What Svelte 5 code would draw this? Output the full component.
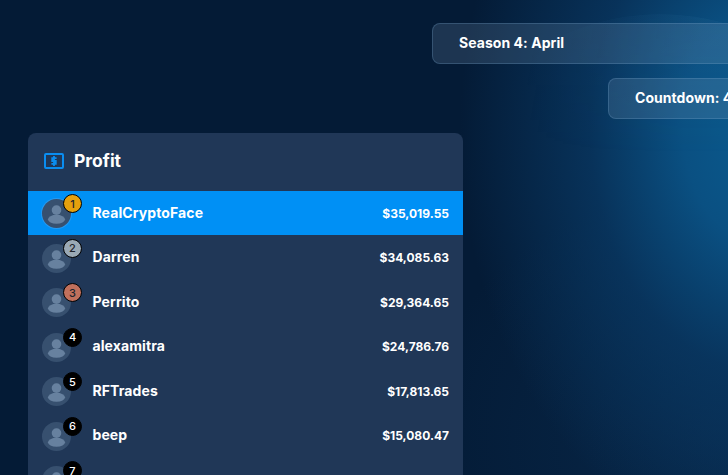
<script>
    const players = [
        { name: 'RealCryptoFace', profit: '$35,019.55', medal: 'gold' },
        { name: 'Darren', profit: '$34,085.63', medal: 'silver' },
        { name: 'Perrito', profit: '$29,364.65', medal: 'bronze' },
        { name: 'alexamitra', profit: '$24,786.76' },
        { name: 'RFTrades', profit: '$17,813.65' },
        { name: 'beep', profit: '$15,080.47' },
        { name: '', profit: '' }
    ];
</script>

<div class="page">
    <div class="glow"></div>

    <div class="pill season"><span>Season 4: April</span></div>
    <div class="pill countdown"><span>Countdown: 4</span></div>

    <section class="card">
        <header class="card-head">
            <svg class="money" width="20" height="16" viewBox="0 0 20 16" fill="none">
                <rect x="1" y="1" width="18" height="14" rx="1" stroke="#0a8df0" stroke-width="2" />
                <path d="M12.6 5.2H8.2v2.8h3.6v2.8H7.4M10 3v10" stroke="#0a8df0" stroke-width="1.8" />
            </svg>
            <h2>Profit</h2>
        </header>

        <ul class="rows">
            {#each players as player, i}
                <li class="row" class:first={i === 0}>
                    <div class="avatar">
                        <svg viewBox="0 0 30 30">
                            <circle cx="15" cy="11.5" r="5" fill="#67819f" />
                            <ellipse cx="15" cy="21" rx="8.8" ry="4.6" fill="#67819f" />
                        </svg>
                        <span class="rank {player.medal ?? ''}">{i + 1}</span>
                    </div>
                    <span class="name">{player.name}</span>
                    <span class="profit">{player.profit}</span>
                </li>
            {/each}
        </ul>
    </section>
</div>

<style>
    :global(html),
    :global(body) {
        margin: 0;
        height: 100%;
        overflow: hidden;
    }

    .page {
        position: relative;
        width: 728px;
        height: 475px;
        overflow: hidden;
        box-sizing: border-box;
        padding-top: 23px;
        font-family: Inter, 'Liberation Sans', sans-serif;
        color: #fff;
        background:
            radial-gradient(ellipse 310px 420px at 770px 130px, #0a5c90 0%, #0a5082 28%, rgba(9, 58, 102, 0.75) 58%, rgba(6, 38, 74, 0) 100%),
            radial-gradient(ellipse 320px 260px at 740px 440px, rgba(9, 44, 80, 0.8) 0%, rgba(6, 30, 60, 0) 100%),
            #041b36;
    }

    .glow {
        position: absolute;
        left: 424px;
        top: 14px;
        width: 472px;
        height: 472px;
        border-radius: 50%;
        background: linear-gradient(100deg, rgba(80, 150, 200, 0) 20%, rgba(80, 150, 200, 0.07) 50%);
        -webkit-mask-image: linear-gradient(180deg, #000 0%, rgba(0, 0, 0, 0) 30%);
        mask-image: linear-gradient(180deg, #000 0%, rgba(0, 0, 0, 0) 30%);
    }

    .pill {
        position: relative;
        box-sizing: border-box;
        height: 41px;
        width: 400px;
        padding-left: 26px;
        padding-bottom: 2px;
        display: flex;
        align-items: center;
        font-size: 14px;
        font-weight: 700;
        letter-spacing: 0.05px;
        white-space: nowrap;
        border: 1px solid rgba(120, 160, 200, 0.28);
        border-radius: 8px;
        background: rgba(130, 160, 190, 0.2);
    }

    .season {
        margin-left: 432px;
    }

    .countdown {
        margin-left: 608px;
        margin-top: 14px;
    }

    .card {
        position: relative;
        margin: 14px 0 0 28px;
        width: 435px;
        background: #203757;
        border-radius: 8px;
        overflow: hidden;
    }

    .card-head {
        height: 57.9px;
        box-sizing: border-box;
        padding: 0 0 2px 16px;
        display: flex;
        align-items: center;
        gap: 10px;
    }

    .card-head h2 {
        margin: 0;
        font-size: 17.5px;
        font-weight: 700;
    }

    .rows {
        list-style: none;
        margin: 0;
        padding: 0;
    }

    .row {
        height: 44.5px;
        display: flex;
        align-items: center;
        padding: 0 14px;
        font-size: 14px;
        font-weight: 700;
        letter-spacing: 0.1px;
    }

    .row.first {
        background: #0090f5;
    }

    .row.first .avatar {
        box-shadow: 0 0 0 1px rgba(60, 160, 240, 0.6);
    }

    .avatar {
        position: relative;
        width: 29px;
        height: 29px;
        margin-top: 1px;
        border-radius: 50%;
        background: #37506f;
        flex-shrink: 0;
    }

    .avatar svg {
        display: block;
        width: 29px;
        height: 29px;
    }

    .rank {
        position: absolute;
        top: -5px;
        right: -11px;
        box-sizing: border-box;
        width: 19px;
        height: 19px;
        border-radius: 50%;
        background: #000;
        border: 1px solid #000;
        display: flex;
        align-items: center;
        justify-content: center;
        font-size: 11px;
        font-weight: 500;
        letter-spacing: 0;
    }

    .rank.gold {
        background: #e5a00d;
        color: #20242c;
    }

    .rank.silver {
        background: #9aa9b5;
        color: #20242c;
    }

    .rank.bronze {
        background: #c0705c;
        color: #20242c;
    }

    .name {
        margin-left: 21.5px;
        padding-bottom: 2px;
        flex: 1;
    }

    .profit {
        font-size: 12px;
        letter-spacing: 0;
    }
</style>
